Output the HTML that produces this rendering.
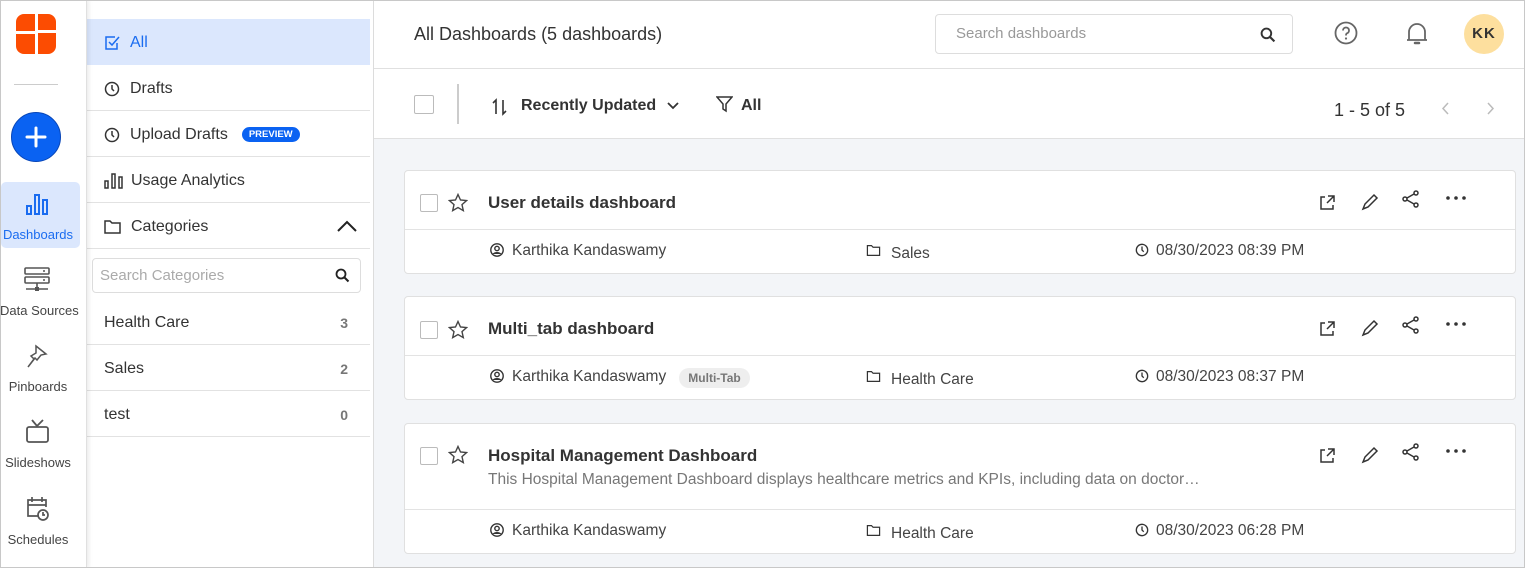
<!DOCTYPE html>
<html><head><meta charset="utf-8"><style>
*{box-sizing:border-box;margin:0;padding:0}
body{width:1525px;height:568px;overflow:hidden;font-family:"Liberation Sans",Arial,sans-serif;color:#333;background:#fff;position:relative}
.a{position:absolute}
.frame{left:0;top:0;width:1525px;height:568px;border:1px solid #c8c8c8;pointer-events:none;z-index:10}
.rail{left:0;top:0;width:87px;height:568px;background:#fff;border-right:1px solid #e0e0e0;box-shadow:2px 0 4px rgba(0,0,0,.08);z-index:3}
.nl{font-size:13px;color:#444;width:76px;left:0;text-align:center;white-space:nowrap}
.side{left:87px;top:0;width:287px;height:568px;border-right:1px solid #dcdcdc;background:#fff}
.it{left:0;width:283px;height:46px;border-bottom:1px solid #e2e2e2;font-size:16px;color:#333;display:flex;align-items:center;padding-left:17px;padding-top:2px}
.it svg{margin-right:10px}
.main{left:374px;top:0;width:1151px;height:568px;background:#f3f5f8}
.card{left:30px;width:1112px;background:#fff;border:1px solid #e0e0e0;border-radius:4px}
.cb{width:18px;height:18px;border:1.5px solid #bbb;border-radius:2px;background:#fff}
.t{font-size:17px;font-weight:bold;color:#333}
.m{font-size:15.5px;color:#444}
</style></head><body>
<div class="a frame"></div>
<div class="a rail">
 <svg class="a" style="left:16px;top:14px" width="40" height="40" viewBox="0 0 40 40" fill="#fc4c02"><path d="M0 8a8 8 0 0 1 8-8h11v17H0z"/><path d="M22 0h10a8 8 0 0 1 8 8v8H22z"/><path d="M0 20h19v20H8a8 8 0 0 1-8-8z"/><path d="M22 19h18v13a8 8 0 0 1-8 8H22z"/></svg>
 <div class="a" style="left:14px;top:84px;width:44px;height:1px;background:#ccc"></div>
 <div class="a" style="left:11px;top:112px;width:50px;height:50px;border-radius:50%;background:#0a62f2;border:1px solid #0846b8"><svg width="48" height="48" viewBox="0 0 48 48"><path d="M24 15v18M15 24h18" stroke="#fff" stroke-width="3" stroke-linecap="round"/></svg></div>
 <div class="a" style="left:1px;top:182px;width:79px;height:66px;background:#dbe7fd;border-radius:5px"></div>
 <svg class="a" style="left:25px;top:193px" width="24" height="22" viewBox="0 0 24 22"><g fill="none" stroke="#1a6cf0" stroke-width="2"><rect x="2" y="13" width="4" height="8"/><rect x="10" y="2" width="4" height="19"/><rect x="18" y="7" width="4" height="14"/></g></svg>
 <div class="a nl" style="top:227px;color:#1a6cf0">Dashboards</div>
 <svg class="a" style="left:24px;top:267px" width="26" height="26" viewBox="0 0 26 26"><g fill="none" stroke="#555" stroke-width="1.6"><rect x="1" y="1" width="24" height="6" rx="1"/><rect x="1" y="10" width="24" height="6" rx="1"/><path d="M13 16v5M2 22h22"/></g><rect x="11" y="20" width="4" height="4" fill="#555"/><circle cx="20" cy="4" r="1" fill="#555"/><circle cx="20" cy="13" r="1" fill="#555"/></svg>
 <div class="a nl" style="top:303px">Data Sources</div>
 <svg class="a" style="left:26px;top:343px" width="24" height="28" viewBox="0 0 24 28"><path d="M10 3l10 8-5 1-4 5-2-2-7 9 6-8-3-3 5-3z" fill="none" stroke="#555" stroke-width="1.5"/></svg>
 <div class="a nl" style="top:379px">Pinboards</div>
 <svg class="a" style="left:25px;top:419px" width="26" height="26" viewBox="0 0 26 26"><g fill="none" stroke="#555" stroke-width="1.8"><rect x="2" y="8" width="21" height="15" rx="2"/><path d="M7 1l5 6 6-6"/></g></svg>
 <div class="a nl" style="top:455px">Slideshows</div>
 <svg class="a" style="left:25px;top:495px" width="26" height="28" viewBox="0 0 26 28"><g fill="none" stroke="#555" stroke-width="1.7"><path d="M14 21H3V5h18v7M3 10h18M7 2v5M17 2v5"/><circle cx="18" cy="20" r="5"/><path d="M18 17v3h2"/></g></svg>
 <div class="a nl" style="top:532px">Schedules</div>
</div>
<div class="a side">
 <div class="a it" style="top:19px;background:#dbe7fd;border:none;color:#1a6cf0"><svg width="16" height="16" viewBox="0 0 16 16"><path d="M13 8v6H2V2h9" fill="none" stroke="#1a6cf0" stroke-width="1.5"/><path d="M5 7l3 3 7-8" fill="none" stroke="#1a6cf0" stroke-width="1.5"/></svg>All</div>
 <div class="a it" style="top:65px"><svg width="16" height="16" viewBox="0 0 16 16"><circle cx="8" cy="8" r="6.5" fill="none" stroke="#333" stroke-width="1.5"/><path d="M8 4v4l2 2" fill="none" stroke="#333" stroke-width="1.5"/></svg>Drafts</div>
 <div class="a it" style="top:111px"><svg width="16" height="16" viewBox="0 0 16 16"><circle cx="8" cy="8" r="6.5" fill="none" stroke="#333" stroke-width="1.5"/><path d="M8 4v4l2 2" fill="none" stroke="#333" stroke-width="1.5"/></svg>Upload Drafts<span style="margin-left:14px;background:#0a62f2;color:#fff;font-size:9.5px;font-weight:bold;padding:2px 7px;border-radius:8px">PREVIEW</span></div>
 <div class="a it" style="top:157px"><svg width="19" height="16" viewBox="0 0 19 16" style="margin-right:8px"><g fill="none" stroke="#333" stroke-width="1.5"><rect x="1" y="8" width="3" height="7"/><rect x="8" y="1" width="3" height="14"/><rect x="15" y="4" width="3" height="11"/></g></svg>Usage Analytics</div>
 <div class="a it" style="top:203px"><svg width="17" height="16" viewBox="0 0 17 16"><path d="M1 2h5l2 2h8v10H1z" fill="none" stroke="#333" stroke-width="1.5"/></svg>Categories<svg class="a" style="left:250px;top:17px" width="20" height="12" viewBox="0 0 20 12"><path d="M1 11l9-9 9 9" fill="none" stroke="#222" stroke-width="2"/></svg></div>
 <div class="a" style="left:5px;top:258px;width:269px;height:35px;border:1px solid #ddd;border-radius:4px;font-size:15px;color:#aaa;padding:8px 7px">Search Categories<svg class="a" style="right:10px;top:9px" width="15" height="15" viewBox="0 0 15 15"><circle cx="6" cy="6" r="4.5" fill="none" stroke="#222" stroke-width="1.8"/><path d="M9.5 9.5l4 4" stroke="#222" stroke-width="2"/></svg></div>
 <div class="a it" style="top:299px;justify-content:space-between;padding-right:22px">Health Care<span style="color:#777;font-weight:bold;font-size:14px">3</span></div>
 <div class="a it" style="top:345px;justify-content:space-between;padding-right:22px">Sales<span style="color:#777;font-weight:bold;font-size:14px">2</span></div>
 <div class="a it" style="top:391px;justify-content:space-between;padding-right:22px">test<span style="color:#777;font-weight:bold;font-size:14px">0</span></div>
</div>
<div class="a main">
 <div class="a" style="left:0;top:0;width:1151px;height:139px;background:#fff;border-bottom:1px solid #e0e0e0"></div>
 <div class="a" style="left:0;top:68px;width:1151px;height:1px;background:#e0e0e0"></div>
 <div class="a" style="left:40px;top:24px;font-size:18px;color:#333">All Dashboards (5 dashboards)</div>
 <div class="a" style="left:561px;top:14px;width:358px;height:40px;border:1px solid #ddd;border-radius:4px;font-size:15px;color:#999;padding:10px 20px">Search dashboards<svg class="a" style="right:16px;top:12px" width="16" height="16" viewBox="0 0 15 15"><circle cx="6" cy="6" r="4.5" fill="none" stroke="#333" stroke-width="1.8"/><path d="M9.5 9.5l4 4" stroke="#333" stroke-width="2"/></svg></div>
 <svg class="a" style="left:960px;top:21px" width="24" height="24" viewBox="0 0 24 24"><circle cx="12" cy="12" r="10.5" fill="none" stroke="#666" stroke-width="1.8"/><path d="M9 9.5a3 3 0 1 1 4 2.8c-1 .4-1 1-1 2.2" fill="none" stroke="#666" stroke-width="1.8"/><circle cx="12" cy="17.5" r="1.1" fill="#666"/></svg>
 <svg class="a" style="left:1031px;top:21px" width="24" height="26" viewBox="0 0 24 26"><path d="M4 19V11a8 8 0 0 1 16 0v8M2 19h20" fill="none" stroke="#666" stroke-width="1.8"/><path d="M10 22h4" stroke="#666" stroke-width="2.5" stroke-linecap="round"/></svg>
 <div class="a" style="left:1090px;top:14px;width:40px;height:40px;border-radius:50%;background:#fddf9e;font-size:15px;font-weight:bold;color:#333;text-align:center;line-height:40px;letter-spacing:1px">KK</div>
 <div class="a cb" style="left:40px;top:95px;width:20px;height:19px"></div>
 <div class="a" style="left:83px;top:84px;width:2px;height:40px;background:#ccc"></div>
 <svg class="a" style="left:117px;top:98px" width="18" height="18" viewBox="0 0 18 18"><path d="M5 16V2L2 5M12 2v14l3-3" fill="none" stroke="#333" stroke-width="1.6"/></svg>
 <div class="a" style="left:147px;top:97px;font-size:16px;font-weight:bold;color:#333">Recently Updated</div>
 <svg class="a" style="left:293px;top:102px" width="12" height="8" viewBox="0 0 12 8"><path d="M1 1l5 5 5-5" fill="none" stroke="#333" stroke-width="1.8"/></svg>
 <svg class="a" style="left:342px;top:96px" width="17" height="17" viewBox="0 0 17 17"><path d="M1 1h15l-6 7v7l-3-2V8z" fill="none" stroke="#333" stroke-width="1.5"/></svg>
 <div class="a" style="left:367px;top:97px;font-size:16px;font-weight:bold;color:#333">All</div>
 <div class="a" style="left:960px;top:100px;font-size:18px;color:#333">1 - 5 of 5</div>
 <svg class="a" style="left:1067px;top:102px" width="8" height="13" viewBox="0 0 8 13"><path d="M7 1L2 6.5 7 12" fill="none" stroke="#bbb" stroke-width="1.5"/></svg>
 <svg class="a" style="left:1113px;top:102px" width="8" height="13" viewBox="0 0 8 13"><path d="M1 1l5 5.5L1 12" fill="none" stroke="#bbb" stroke-width="1.5"/></svg>

 <div class="a card" style="top:170px;height:104px">
  <div class="a cb" style="left:15px;top:23px"></div>
  <svg class="a" style="left:43px;top:22px" width="20" height="20" viewBox="0 0 20 20"><path d="M10 1.5l2.5 5.5 6 .6-4.5 4 1.3 6-5.3-3.1-5.3 3.1 1.3-6-4.5-4 6-.6z" fill="none" stroke="#444" stroke-width="1.4"/></svg>
  <div class="a t" style="left:83px;top:22px">User details dashboard</div>
  <div class="a" style="left:0;top:58px;width:1110px;height:1px;background:#e3e3e3"></div>
  <svg class="a" style="left:85px;top:72px" width="14" height="14" viewBox="0 0 14 14"><circle cx="7" cy="7" r="6.2" fill="none" stroke="#333" stroke-width="1.4"/><circle cx="7" cy="5.5" r="2.2" fill="none" stroke="#333" stroke-width="1.4"/><path d="M2.5 11a5 3.5 0 0 1 9 0z" fill="#333"/></svg>
  <div class="a m" style="left:107px;top:71px">Karthika Kandaswamy</div>
  <svg class="a" style="left:461px;top:73px" width="15" height="13" viewBox="0 0 17 16"><path d="M1 2h5l2 2h8v10H1z" fill="none" stroke="#333" stroke-width="1.5"/></svg>
  <div class="a m" style="left:486px;top:74px">Sales</div>
  <svg class="a" style="left:730px;top:72px" width="14" height="14" viewBox="0 0 16 16"><circle cx="8" cy="8" r="6.5" fill="none" stroke="#333" stroke-width="1.5"/><path d="M8 4v4l2 2" fill="none" stroke="#333" stroke-width="1.5"/></svg>
  <div class="a m" style="left:751px;top:71px">08/30/2023 08:39 PM</div>
 </div>
 <div class="a card" style="top:296px;height:104px">
  <div class="a cb" style="left:15px;top:24px"></div>
  <svg class="a" style="left:43px;top:23px" width="20" height="20" viewBox="0 0 20 20"><path d="M10 1.5l2.5 5.5 6 .6-4.5 4 1.3 6-5.3-3.1-5.3 3.1 1.3-6-4.5-4 6-.6z" fill="none" stroke="#444" stroke-width="1.4"/></svg>
  <div class="a t" style="left:83px;top:22px">Multi_tab dashboard</div>
  <div class="a" style="left:0;top:58px;width:1110px;height:1px;background:#e3e3e3"></div>
  <svg class="a" style="left:85px;top:72px" width="14" height="14" viewBox="0 0 14 14"><circle cx="7" cy="7" r="6.2" fill="none" stroke="#333" stroke-width="1.4"/><circle cx="7" cy="5.5" r="2.2" fill="none" stroke="#333" stroke-width="1.4"/><path d="M2.5 11a5 3.5 0 0 1 9 0z" fill="#333"/></svg>
  <div class="a m" style="left:107px;top:71px">Karthika Kandaswamy</div>
  <div class="a" style="left:274px;top:71px;width:71px;height:20px;border-radius:10px;background:#eee;font-size:12px;font-weight:bold;color:#777;text-align:center;line-height:20px">Multi-Tab</div>
  <svg class="a" style="left:461px;top:73px" width="15" height="13" viewBox="0 0 17 16"><path d="M1 2h5l2 2h8v10H1z" fill="none" stroke="#333" stroke-width="1.5"/></svg>
  <div class="a m" style="left:486px;top:74px">Health Care</div>
  <svg class="a" style="left:730px;top:72px" width="14" height="14" viewBox="0 0 16 16"><circle cx="8" cy="8" r="6.5" fill="none" stroke="#333" stroke-width="1.5"/><path d="M8 4v4l2 2" fill="none" stroke="#333" stroke-width="1.5"/></svg>
  <div class="a m" style="left:751px;top:71px">08/30/2023 08:37 PM</div>
 </div>
 <div class="a card" style="top:423px;height:131px">
  <div class="a cb" style="left:15px;top:23px"></div>
  <svg class="a" style="left:43px;top:21px" width="20" height="20" viewBox="0 0 20 20"><path d="M10 1.5l2.5 5.5 6 .6-4.5 4 1.3 6-5.3-3.1-5.3 3.1 1.3-6-4.5-4 6-.6z" fill="none" stroke="#444" stroke-width="1.4"/></svg>
  <div class="a t" style="left:83px;top:22px">Hospital Management Dashboard</div>
  <div class="a" style="left:83px;top:47px;font-size:15.5px;color:#777;white-space:nowrap">This Hospital Management Dashboard displays healthcare metrics and KPIs, including data on doctor…</div>
  <div class="a" style="left:0;top:85px;width:1110px;height:1px;background:#e3e3e3"></div>
  <svg class="a" style="left:85px;top:99px" width="14" height="14" viewBox="0 0 14 14"><circle cx="7" cy="7" r="6.2" fill="none" stroke="#333" stroke-width="1.4"/><circle cx="7" cy="5.5" r="2.2" fill="none" stroke="#333" stroke-width="1.4"/><path d="M2.5 11a5 3.5 0 0 1 9 0z" fill="#333"/></svg>
  <div class="a m" style="left:107px;top:98px">Karthika Kandaswamy</div>
  <svg class="a" style="left:461px;top:100px" width="15" height="13" viewBox="0 0 17 16"><path d="M1 2h5l2 2h8v10H1z" fill="none" stroke="#333" stroke-width="1.5"/></svg>
  <div class="a m" style="left:486px;top:101px">Health Care</div>
  <svg class="a" style="left:730px;top:99px" width="14" height="14" viewBox="0 0 16 16"><circle cx="8" cy="8" r="6.5" fill="none" stroke="#333" stroke-width="1.5"/><path d="M8 4v4l2 2" fill="none" stroke="#333" stroke-width="1.5"/></svg>
  <div class="a m" style="left:751px;top:98px">08/30/2023 06:28 PM</div>
 </div>
</div>
<svg class="a" style="left:1318px;top:190px" width="200" height="280" viewBox="0 0 200 280">
 <defs><g id="ic">
  <path d="M6 3H2v12h12v-4M9 2h6v6M15 2L8 9" fill="none" stroke="#333" stroke-width="1.5" transform="translate(1,4)"/>
  <path d="M45 19l2-5 9-9 3 3-9 9z" fill="none" stroke="#333" stroke-width="1.5"/>
  <g fill="none" stroke="#333" stroke-width="1.5"><circle cx="87" cy="9" r="2"/><circle cx="98" cy="3" r="2"/><circle cx="98" cy="15" r="2"/><path d="M89 8l7-4M89 10l7 4"/></g>
  <g fill="#333"><circle cx="130" cy="8" r="1.8"/><circle cx="138" cy="8" r="1.8"/><circle cx="146" cy="8" r="1.8"/></g>
 </g></defs>
 <use href="#ic" x="0" y="0"/>
 <use href="#ic" x="0" y="126"/>
 <use href="#ic" x="0" y="253"/>
</svg>
</body></html>
